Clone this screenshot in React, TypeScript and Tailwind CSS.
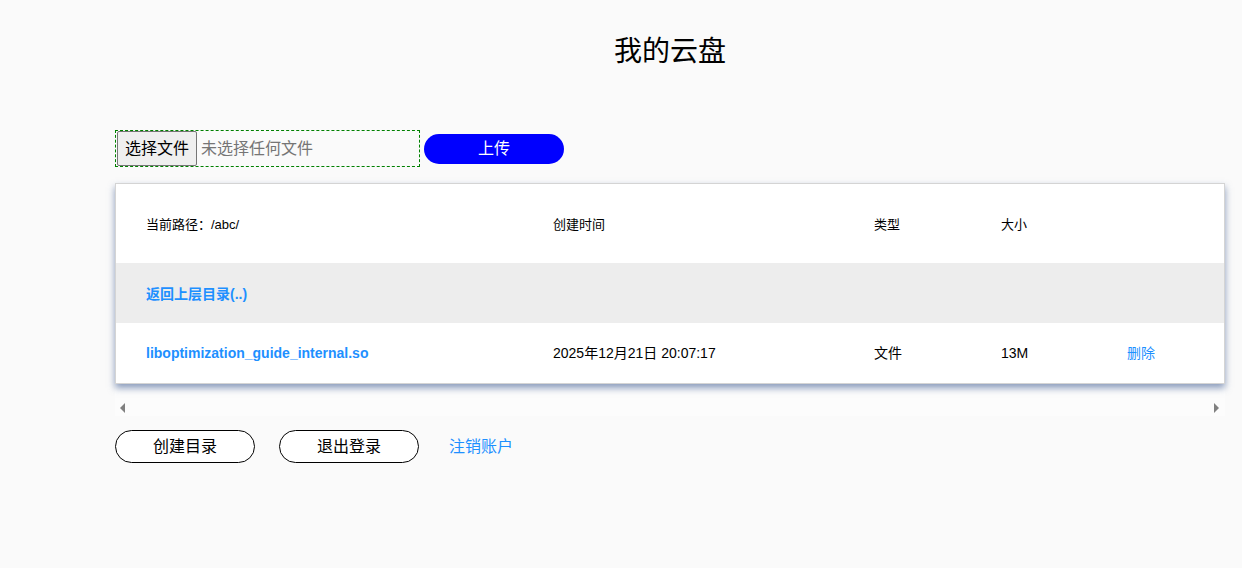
export default function App() {
  const font = { fontFamily: '"Liberation Sans", "Noto Sans CJK SC", Arial, sans-serif' }

  return (
    <div className="min-h-[568px] bg-[#fafafa] text-black" style={font}>
      <div className="ml-[115px] w-[1110px]">
        <h1 className="pt-[32px] text-center text-[28px] leading-[40px] font-normal">我的云盘</h1>

        {/* upload */}
        <div className="mt-[58px] flex items-center gap-[4px]">
          <div className="flex h-[37px] w-[305px] items-center border border-dashed border-[#008000] pl-[1px]">
            <button className="h-[35px] rounded-[2px] border border-[#767676] bg-[#efefef] px-[7px] text-[16px] leading-[33px]">选择文件</button>
            <span className="ml-[4px] text-[16px] text-[#757575]">未选择任何文件</span>
          </div>
          <button className="h-[30px] w-[140px] rounded-full bg-[#0000ff] text-[16px] text-white">上传</button>
        </div>

        {/* table */}
        <div className="mt-[16px]">
          <div className="relative z-10 border border-[#d4d4d4] bg-white shadow-[0_4px_7px_rgba(60,90,145,0.6)]">
            <div className="grid h-[79px] grid-cols-[407px_321px_127px_126px_1fr] items-center pl-[30px] pt-[2px] text-[13px]">
              <div>当前路径：/abc/</div>
              <div>创建时间</div>
              <div>类型</div>
              <div>大小</div>
              <div></div>
            </div>
            <div className="flex h-[60px] items-center bg-[#ededed] pl-[30px] pt-[2px] text-[14px] font-bold text-[#1e90ff]">
              返回上层目录(..)
            </div>
            <div className="grid h-[60px] grid-cols-[407px_321px_127px_126px_1fr] items-center pl-[30px] pt-[1px] text-[14px]">
              <div className="font-bold text-[#1e90ff]">liboptimization_guide_internal.so</div>
              <div>2025年12月21日 20:07:17</div>
              <div>文件</div>
              <div>13M</div>
              <div className="text-[#1e90ff]">删除</div>
            </div>
          </div>
          <div className="flex h-[32px] items-center justify-between bg-[#fcfcfc] pl-[5px] pr-[6px] pt-[15px]">
            <span className="h-0 w-0 border-y-[5px] border-r-[5px] border-y-transparent border-r-[#808080]"></span>
            <span className="h-0 w-0 border-y-[5px] border-l-[5px] border-y-transparent border-l-[#808080]"></span>
          </div>
        </div>

        {/* actions */}
        <div className="mt-[14px] flex items-center">
          <button className="h-[33px] w-[140px] rounded-full border border-black bg-white text-[16px]">创建目录</button>
          <button className="ml-[24px] h-[33px] w-[140px] rounded-full border border-black bg-white text-[16px]">退出登录</button>
          <a className="ml-[30px] text-[16px] text-[#1e90ff]">注销账户</a>
        </div>
      </div>
    </div>
  )
}
